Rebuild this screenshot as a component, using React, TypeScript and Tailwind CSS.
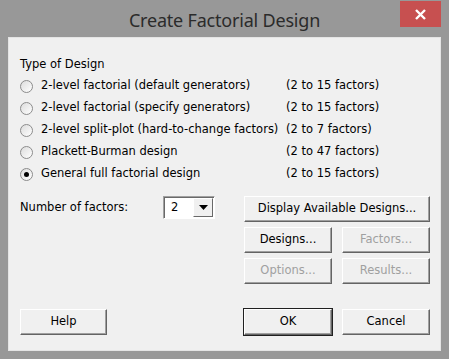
import React from 'react';

const designs = [
  { label: '2-level factorial (default generators)', range: '(2 to 15 factors)' },
  { label: '2-level factorial (specify generators)', range: '(2 to 15 factors)' },
  { label: '2-level split-plot (hard-to-change factors)', range: '(2 to 7 factors)' },
  { label: 'Plackett-Burman design', range: '(2 to 47 factors)' },
  { label: 'General full factorial design', range: '(2 to 15 factors)' },
];

function Radio({ checked }: { checked?: boolean }) {
  return (
    <span className="w-[13px] h-[13px] rounded-full border border-[#8c8c8c] bg-gradient-to-br from-[#dcdcdc] to-white flex items-center justify-center shrink-0">
      {checked && <span className="w-[5px] h-[5px] rounded-full bg-black" />}
    </span>
  );
}

function WinButton({
  children,
  width = 'w-[88px]',
  disabled,
  isDefault,
}: {
  children: React.ReactNode;
  width?: string;
  disabled?: boolean;
  isDefault?: boolean;
}) {
  return (
    <button
      type="button"
      className={`${width} h-[26px] bg-[#f0f0f0] border border-t-white border-l-white border-b-[#646464] border-r-[#646464] shadow-[inset_-1px_-1px_0_#a0a0a0] text-[11.5px] flex items-center justify-center ${
        disabled ? 'text-[#a0a0a0]' : 'text-black'
      } ${isDefault ? 'outline outline-1 outline-[#202020]' : ''}`}
    >
      {children}
    </button>
  );
}

export default function App() {
  return (
    <div className="w-[449px] h-[359px] bg-[#989898] flex flex-col font-['DejaVu_Sans',Verdana,sans-serif]">
      <div className="h-[37px] grid grid-cols-[1fr_auto_1fr] items-start">
        <div />
        <h1 className="pt-[8px] text-[18px] leading-[24px] text-[#2b2b2b] font-['Noto_Sans','Open_Sans',sans-serif] tracking-[-0.2px]">
          Create Factorial Design
        </h1>
        <div className="flex justify-end pr-[8px] pt-[1px]">
          <div className="w-[41px] h-[26px] bg-[#c75050] flex items-center justify-center">
            <svg width="11" height="11" viewBox="0 0 11 11">
              <path d="M1 1 L10 10 M10 1 L1 10" stroke="white" strokeWidth="2.4" />
            </svg>
          </div>
        </div>
      </div>

      <div className="mx-[8px] mb-[8px] flex-1 bg-[#f0f0f0] border border-[#e4e4e4] pl-[11px] pr-[10px] pt-[18px] pb-[15px] flex flex-col text-[11.5px] text-black">
        <div className="leading-[16px]">Type of Design</div>
        <div className="mt-[3px] flex flex-col">
          {designs.map((d, i) => (
            <div key={d.label} className="h-[22px] flex items-center">
              <div className="w-[266px] flex items-center gap-[8px]">
                <Radio checked={i === 4} />
                <span className="whitespace-nowrap">{d.label}</span>
              </div>
              <span className="whitespace-nowrap">{d.range}</span>
            </div>
          ))}
        </div>

        <div className="mt-[11px] flex">
          <div className="w-[224px] flex items-start">
            <span className="w-[143px] h-[23px] flex items-center">Number of factors:</span>
            <div className="w-[52px] h-[23px] bg-white border border-t-[#a0a0a0] border-l-[#a0a0a0] border-b-white border-r-white flex items-center shadow-[inset_1px_1px_0_#696969]">
              <span className="flex-1 pl-[7px] pt-[1px]">2</span>
              <div className="w-[20px] h-[19px] mr-[1px] bg-[#f0f0f0] border border-t-white border-l-white border-b-[#696969] border-r-[#696969] flex items-center justify-center">
                <svg width="9" height="5" viewBox="0 0 9 5">
                  <path d="M0 0 L9 0 L4.5 5 Z" fill="black" />
                </svg>
              </div>
            </div>
          </div>
          <div className="flex flex-col gap-[5px]">
            <WinButton width="w-[186px]">Display Available Designs...</WinButton>
            <div className="flex gap-[10px]">
              <WinButton>Designs...</WinButton>
              <WinButton disabled>Factors...</WinButton>
            </div>
            <div className="flex gap-[10px]">
              <WinButton disabled>Options...</WinButton>
              <WinButton disabled>Results...</WinButton>
            </div>
          </div>
        </div>

        <div className="mt-auto flex">
          <WinButton width="w-[87px]">Help</WinButton>
          <div className="ml-auto flex gap-[10px]">
            <WinButton isDefault>OK</WinButton>
            <WinButton>Cancel</WinButton>
          </div>
        </div>
      </div>
    </div>
  );
}
